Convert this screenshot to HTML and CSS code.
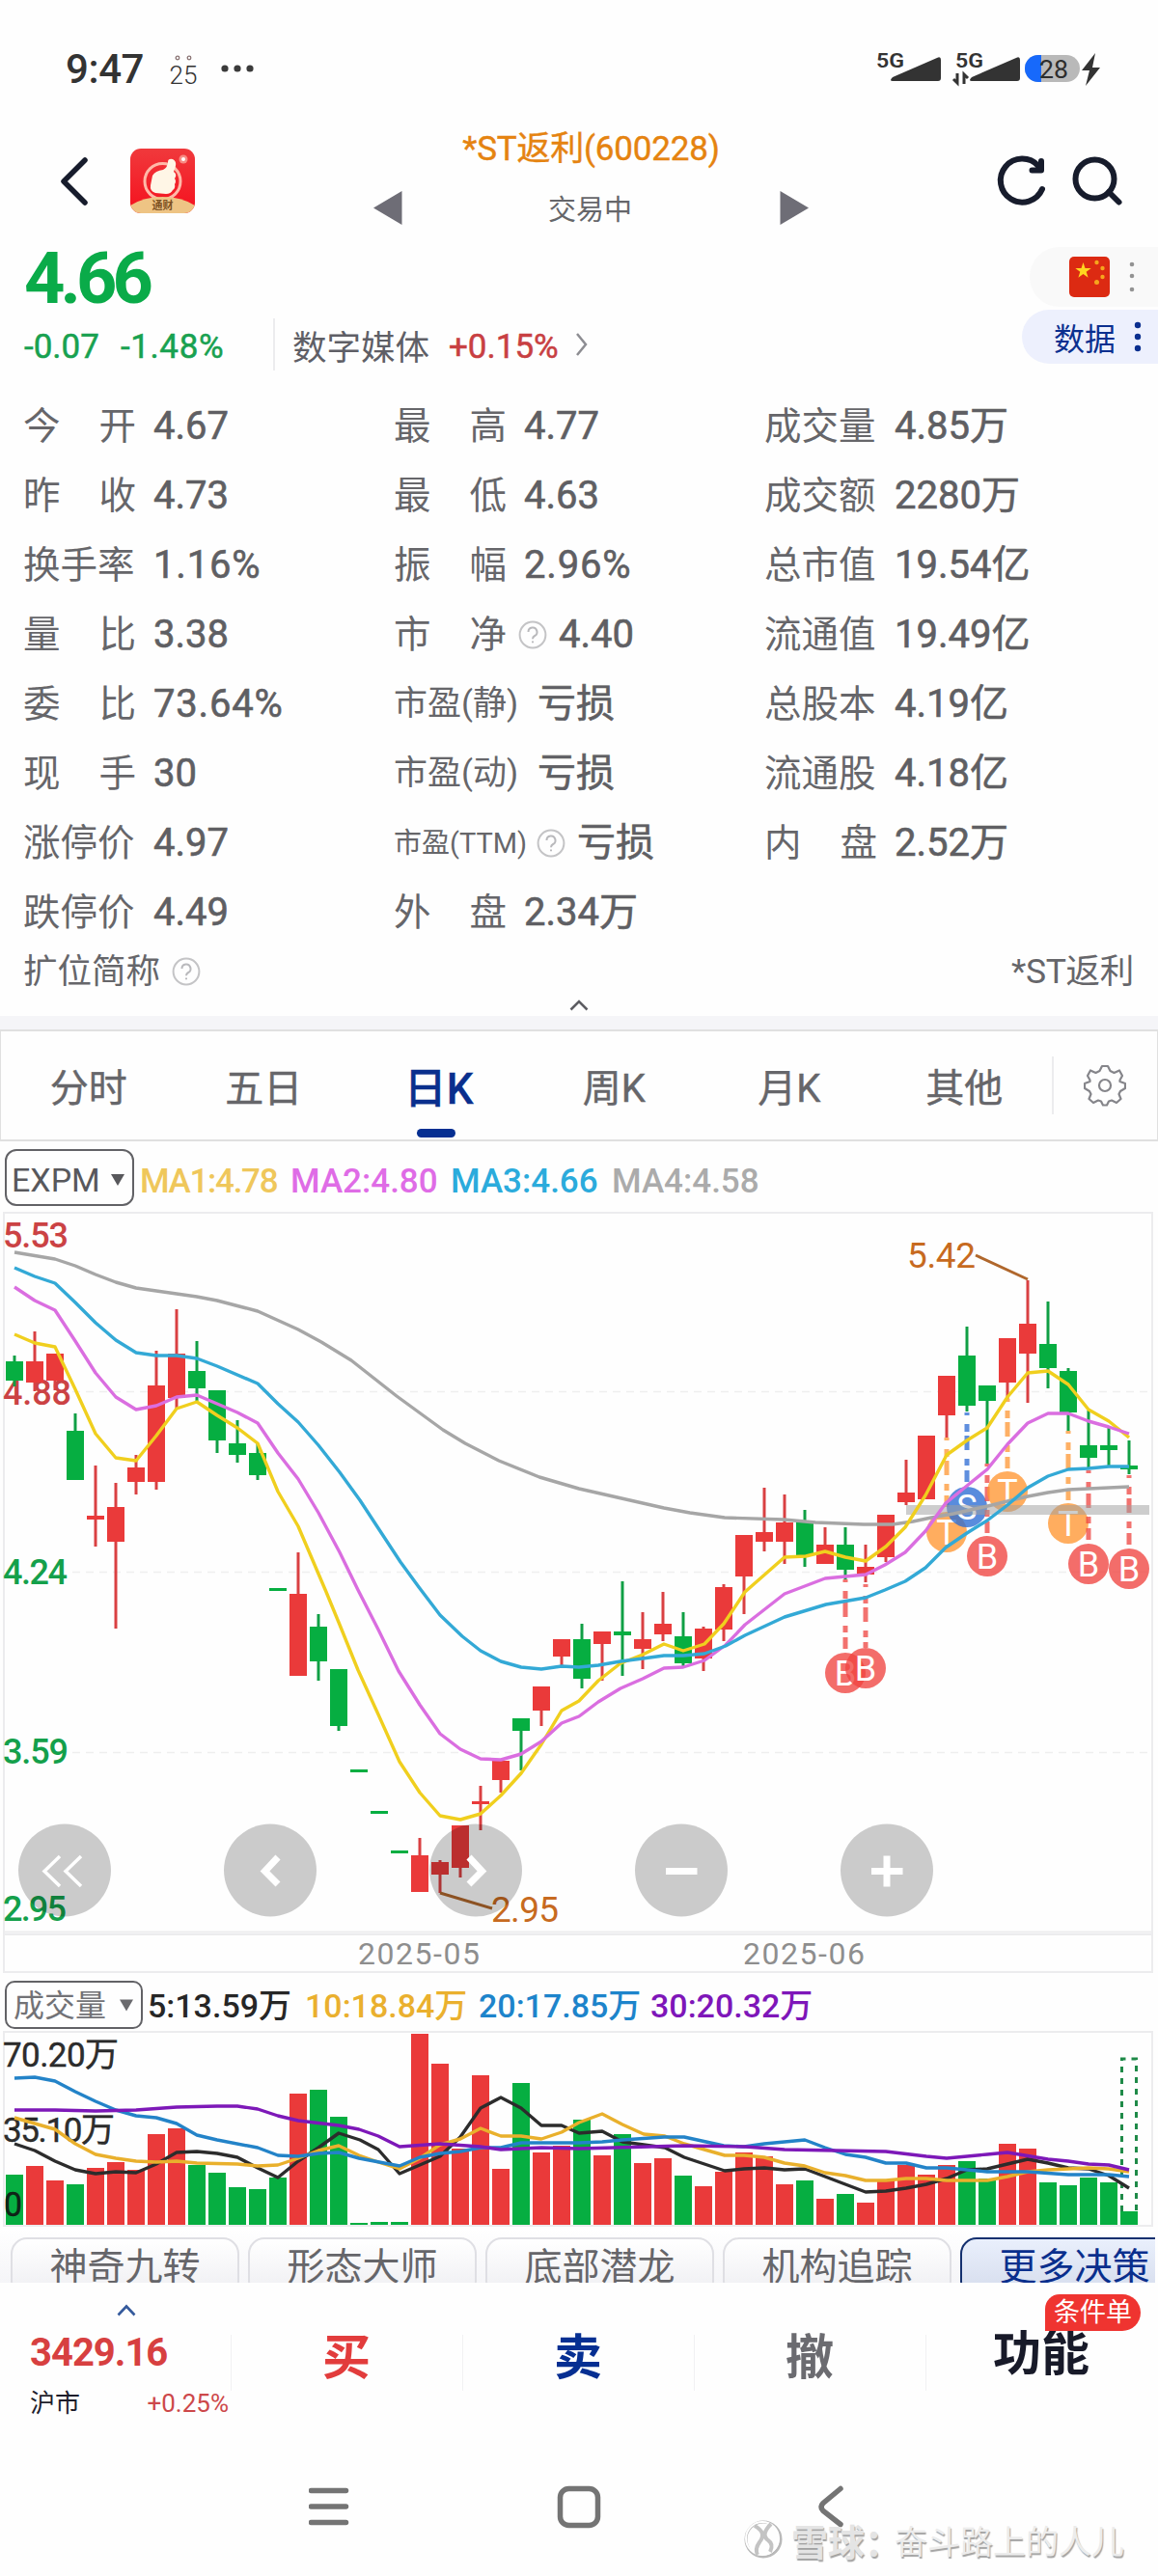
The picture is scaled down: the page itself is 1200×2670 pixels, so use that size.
FILE: index.html
```html
<!DOCTYPE html>
<html lang="zh-CN">
<head>
<meta charset="utf-8">
<title>*ST返利(600228)</title>
<link rel="stylesheet" href="styles.css">
</head>
<body>
<svg class="defs" width="0" height="0">
  <symbol id="help" viewBox="0 0 30 30"><circle cx="15" cy="15" r="13.4" fill="none" stroke="#c4c4c6" stroke-width="2"/><path d="M10.5 12a4.5 4.5 0 1 1 6.600 4c-1.500.8-2.100 1.500-2.100 3.200M15 21.500v1.800" fill="none" stroke="#b9b9bc" stroke-width="2"/></symbol>
</svg>
<main class="screen">
  <div class="status">
    <span class="clock">9:47</span>
    <span class="temp"><svg width="20" height="10" viewBox="0 0 20 10" fill="none" stroke="#8a7474" stroke-width="1.300"><circle cx="4" cy="5" r="1.800"/><circle cx="16" cy="5" r="1.800"/></svg><b>25</b></span>
    <svg class="more" width="34" height="8" viewBox="0 0 34 8" fill="#3b3b3b"><circle cx="4" cy="4" r="3.600"/><circle cx="17" cy="4" r="3.600"/><circle cx="30" cy="4" r="3.600"/></svg>
    <svg class="signals" width="240" height="42" viewBox="905 50 240 42">
      <g class="net"><text x="908" y="70" textLength="29" lengthAdjust="spacingAndGlyphs">5G</text><text x="990" y="70" textLength="29" lengthAdjust="spacingAndGlyphs">5G</text></g>
      <path d="M925 84h47q3 0 3-3V62q0-4-4-2l-46 20q-4 4 0 4zM1007 84h47q3 0 3-3V62q0-4-4-2l-46 20q-4 4 0 4z" fill="#333"/>
      <path d="M992 76v10l-4-4M999 87V77l4 4" fill="none" stroke="#333" stroke-width="3"/>
      <rect x="1062" y="57" width="57" height="28" rx="14" fill="#b9b9b9"/>
      <path d="M1079 57h-3a14 14 0 0 0 0 28h3z" fill="#1769fb"/>
      <text class="batt" x="1077" y="81" textLength="30" lengthAdjust="spacingAndGlyphs">28</text>
      <path d="M1135 55l-14 18h8l-4 16 15-19h-8z" fill="#333"/>
    </svg>
  </div>

  <header class="head">
    <svg class="back" width="30" height="52" viewBox="0 0 30 52"><path d="M26 4L4 26l22 22" fill="none" stroke="#171c2c" stroke-width="5.500" stroke-linecap="round" stroke-linejoin="round"/></svg>
    <svg class="logo" width="67" height="67" viewBox="0 0 67 67">
      <defs><clipPath id="lc"><rect width="67" height="67" rx="11"/></clipPath><linearGradient id="lg" x2="0" y2="1"><stop stop-color="#f0393c"/><stop offset="1" stop-color="#f5111e"/></linearGradient></defs>
      <g clip-path="url(#lc)"><rect width="67" height="67" fill="url(#lg)"/>
      <circle cx="33.500" cy="34" r="18.500" fill="none" stroke="#ffb9a8" stroke-width="3"/>
      <path d="M23 28q3-5 11-6 5-3 5-8 0-4 5-3 4 2 3 7l-2 6q4 3 1 7 2 3 0 6 1 4-2 6-2 4-7 4l-11-1q-6-2-5-8z" fill="#fff6e6"/>
      <circle cx="55" cy="11" r="4.500" fill="#f88b83"/><circle cx="55" cy="11" r="2" fill="#fff"/>
      <path d="M0 59q14-9 33.500-9T67 59v8H0z" fill="#eec484"/></g>
      <text x="33.500" y="63" text-anchor="middle" class="logo-text">通财</text>
    </svg>
    <svg class="arrow left" width="30" height="35" viewBox="0 0 30 35"><path d="M29.500 0v35L0 17.500z" fill="#6e6d76"/></svg>
    <div class="title"><h1>*ST返利(600228)</h1><p>交易中</p></div>
    <svg class="arrow right" width="30" height="35" viewBox="0 0 30 35"><path d="M.5 0v35L30 17.500z" fill="#6e6d76"/></svg>
    <svg class="tools" width="132" height="54" viewBox="1032 161 132 54" fill="none" stroke="#171c2c" stroke-width="6" stroke-linecap="round">
      <path d="M1080 196a22.500 22.500 0 1 1-4-24"/><path d="M1079 167v9.500h-9.500" stroke-linejoin="round"/><path d="M1079 168v9h-9z" fill="#171c2c" stroke="none"/>
      <circle cx="1134.500" cy="185.500" r="20"/><path d="M1149 199l10.500 10.500"/>
    </svg>
  </header>

  <section class="quote">
    <div class="quote-main">
      <div class="price">4.66</div>
      <div class="change"><span class="g1">-0.07</span><span class="g2">-1.48%</span><span class="sep"></span><span class="sector">数字媒体</span><span class="sector-chg">+0.15%</span><svg width="14" height="26" viewBox="0 0 14 26"><path d="M2 2l9 11-9 11" fill="none" stroke="#8d8d92" stroke-width="2.500"/></svg></div>
    </div>
    <div class="chips">
      <div class="chip flag-chip">
        <svg width="42" height="42" viewBox="0 0 42 42"><rect width="42" height="42" rx="5" fill="#dc2a12"/><path d="M14.500 6l2 6h6.200l-5 3.700 1.900 6-5.100-3.700-5.100 3.700 1.900-6-5-3.700h6.200z" fill="#ffd61f"/><g fill="#f6a51d"><circle cx="28.500" cy="6" r="2.200"/><circle cx="34.500" cy="12" r="2.200"/><circle cx="34.500" cy="21" r="2.200"/><circle cx="28.500" cy="26.500" r="2.500"/></g></svg>
        <svg width="6" height="34" viewBox="0 0 6 34" fill="#939393"><circle cx="3" cy="4" r="2.300"/><circle cx="3" cy="16" r="2.300"/><circle cx="3" cy="30" r="2.300"/></svg>
      </div>
      <div class="chip data-chip"><span>数据</span><svg width="8" height="34" viewBox="0 0 8 34" fill="#0b2f8f"><circle cx="4" cy="5" r="3.200"/><circle cx="4" cy="17" r="3.200"/><circle cx="4" cy="29" r="3.200"/></svg></div>
    </div>
  </section>

  <section class="facts">
    <div><label><i>今</i><i>开</i></label><b>4.67</b></div><div><label><i>最</i><i>高</i></label><b>4.77</b></div><div><label>成交量</label><b>4.85万</b></div>
    <div><label><i>昨</i><i>收</i></label><b>4.73</b></div><div><label><i>最</i><i>低</i></label><b>4.63</b></div><div><label>成交额</label><b>2280万</b></div>
    <div><label>换手率</label><b class="pct">1.16%</b></div><div><label><i>振</i><i>幅</i></label><b class="pct">2.96%</b></div><div><label>总市值</label><b>19.54亿</b></div>
    <div><label><i>量</i><i>比</i></label><b>3.38</b></div><div><label><i>市</i><i>净</i></label><svg class="help"><use href="#help"/></svg><b class="after-help">4.40</b></div><div><label>流通值</label><b>19.49亿</b></div>
    <div><label><i>委</i><i>比</i></label><b class="pct">73.64%</b></div><div><label class="mid">市盈(静)</label><b>亏损</b></div><div><label>总股本</label><b>4.19亿</b></div>
    <div><label><i>现</i><i>手</i></label><b>30</b></div><div><label class="mid">市盈(动)</label><b>亏损</b></div><div><label>流通股</label><b>4.18亿</b></div>
    <div><label>涨停价</label><b>4.97</b></div><div><label class="small">市盈(TTM)</label><svg class="help"><use href="#help"/></svg><b class="after-help">亏损</b></div><div><label><i>内</i><i>盘</i></label><b>2.52万</b></div>
    <div><label>跌停价</label><b>4.49</b></div><div><label><i>外</i><i>盘</i></label><b>2.34万</b></div><div></div>
  </section>
  <div class="short-name"><span>扩位简称</span><svg class="help"><use href="#help"/></svg><span class="short-value">*ST返利</span></div>
  <div class="collapse"><svg width="20" height="12" viewBox="0 0 20 12"><path d="M1.500 10.500L10 2l8.500 8.500" fill="none" stroke="#5d5d62" stroke-width="2.500"/></svg></div>
  <div class="band"></div>

  <nav class="tabs">
    <span>分时</span><span>五日</span><span class="on">日K</span><span>周K</span><span>月K</span><span>其他</span>
    <div class="gear"><svg width="44" height="44" viewBox="-22 -22 44 44" fill="none" stroke="#85858a" stroke-width="2.200" stroke-linejoin="round"><path d="M-3-20H3L5.500-15 9.500-13 15-15.500 18-10 15.500-5.500V-4L21-2V3L16 6 14.500 9 16.500 14 12 18 7 15.500 4 16.500 2 20.500H-2L-4 16.500-7 15.500-12 18-16.500 14-14.500 9-16 6-21 3V-2L-15.500-4V-5.500L-18-10-15-15.500-9.500-13-5.500-15z"/><circle r="6"/></svg></div>
  </nav>

  <div class="legend">
    <span class="select">EXPM<svg width="14" height="12" viewBox="0 0 14 12"><path d="M0 0h14L7 12z" fill="#58585c"/></svg></span>
    <span class="ma1">MA1:4.78</span><span class="ma2">MA2:4.80</span><span class="ma3">MA3:4.66</span><span class="ma4">MA4:4.58</span>
  </div>
  <svg id="kline" class="chart" width="1200" height="790" viewBox="0 1256 1200 790">
    <g fill="none" stroke="#ececee" stroke-width="2"><path d="M4 2044V1257H1194V2044z"/><path d="M4 2002.500H1194M4 2005H1194"/></g>
    <path d="M75 1442.500H1190M75 1629.500H1190M75 1816.500H1190" stroke="#efefef" stroke-width="1.500" stroke-dasharray="8 6"/>
    <g class="axis">
      <text x="3" y="1293" textLength="68">5.53</text><text x="3" y="1456" textLength="71">4.88</text>
      <text x="3" y="1642" textLength="67" class="down">4.24</text><text x="3" y="1828" textLength="68" class="down">3.59</text><text x="3" y="1991" textLength="66" class="down">2.95</text>
    </g>
    <g id="candles"></g>
    <g class="note"><path d="M1011 1301L1065 1326M456 1962L510 1978"/><text x="940" y="1313.500" textLength="71">5.42</text><text x="509" y="1991.500" textLength="70">2.95</text></g>
    <g class="dates"><text x="371" y="2035.500" textLength="126">2025-05</text><text x="770" y="2035.500" textLength="126">2025-06</text></g>
    <g id="signals"></g>
    <rect x="939" y="1560" width="252" height="10" fill="#a0a0a0" fill-opacity=".52"/>
    <g id="averages" class="lines"></g>
    <g class="controls">
      <circle cx="67" cy="1938.500" r="48"/><circle cx="280" cy="1938.500" r="48"/><circle cx="493" cy="1938.500" r="48"/><circle cx="706" cy="1938.500" r="48"/><circle cx="919" cy="1938.500" r="48"/>
      <path class="thin" d="M62 1924L46 1939.500 62 1955M84 1924L68 1939.500 84 1955"/>
      <path d="M288 1925L274.500 1939.500 288 1953M486 1925L499.500 1939.500 486 1953"/><path d="M690 1939.500H722.500M903 1939.500H935.500M919 1923.500V1955.500" stroke-width="8.500"/>
    </g>
  </svg>

  <div class="legend vol-legend">
    <span class="select">成交量<svg width="14" height="13" viewBox="0 0 14 12"><path d="M0 0h14L7 12z" fill="#6a6a6e"/></svg></span>
    <span class="v5">5:13.59万</span><span class="v10">10:18.84万</span><span class="v20">20:17.85万</span><span class="v30">30:20.32万</span>
  </div>
  <svg id="volume" class="chart" width="1200" height="205" viewBox="0 2105 1200 205">
    <path d="M4 2307V2106H1194V2307z" fill="none" stroke="#ececee" stroke-width="2"/>
    <g id="bars"></g>
    <path d="M1162.500 2292V2134H1177.500V2292" fill="none" stroke="#1f8a48" stroke-width="3" stroke-dasharray="6 6"/>
    <g class="vol-axis"><text x="3" y="2142" textLength="120">70.20万</text><text x="3" y="2220" textLength="116">35.10万</text><text x="4" y="2297" textLength="19" lengthAdjust="spacingAndGlyphs">0</text></g>
    <g id="volAverages" class="lines"></g>
  </svg>

  <div class="pills"><span>神奇九转</span><span>形态大师</span><span>底部潜龙</span><span>机构追踪</span><span class="primary">更多决策</span></div>

  <footer class="trade">
    <div class="index"><svg width="20" height="13" viewBox="0 0 20 13"><path d="M1.500 11.500L10 2.500l8.500 9" fill="none" stroke="#355a9c" stroke-width="2.600"/></svg><strong>3429.16</strong><p><span>沪市</span><em>+0.25%</em></p></div>
    <div class="act buy">买</div><div class="act sell">卖</div><div class="act cancel">撤</div>
    <div class="act func">功能<span class="badge">条件单</span></div>
  </footer>

  <div class="sysnav">
    <svg class="keys" width="540" height="50" viewBox="320 2571 540 50" fill="none" stroke="#747474" stroke-width="5.500" stroke-linecap="round" stroke-linejoin="round"><path d="M322.500 2579.500H358.500M322.500 2596H358.500M322.500 2612.500H358.500"/><rect x="580.500" y="2577.500" width="39" height="38" rx="9"/></svg>
    <svg class="back-key" width="30" height="50" viewBox="845 2571 30 50"><path d="M871 2577.500L853 2592.500Q849 2596.500 853 2600.500L871 2614.500" fill="none" stroke="#747474" stroke-width="5.500" stroke-linecap="round"/></svg>
    <div class="mark">
      <svg width="42" height="42" viewBox="0 0 42 42" fill="none"><circle cx="21" cy="21" r="18" stroke="#b9b9b9" stroke-width="3"/><circle cx="20" cy="20" r="17" stroke="#fff" stroke-width="2"/><path d="M12 7q13 7 5 17-5 7-2 13M29 5q-11 11-3 17 6 4 2 12" stroke="#c3c3c3" stroke-width="4"/></svg>
      <b>雪球：</b><span>奋斗路上的人儿</span>
    </div>
  </div>
</main>
<script src="chart.js"></script>
</body>
</html>
```
FILE: styles.css
```css
* { box-sizing: border-box; }
body { margin: 0; background: #fff; }
.screen { width: 1200px; height: 2670px; overflow: hidden; display: flex; flex-direction: column; background: #fefefe; font-family: Roboto, "Noto Sans CJK SC", sans-serif; color: #66666a; }
.screen > * { flex: none; }
svg { display: block; flex: none; }
.defs { position: absolute; }
i, em { font-style: normal; }
h1, p { margin: 0; font-weight: 400; }
span, b, strong, label { white-space: nowrap; }

.status { height: 140px; padding: 50px 55px 48px 68px; display: flex; align-items: center; color: #333; }
.clock { font-size: 42px; line-height: 42px; font-weight: 500; letter-spacing: -.4px; width: 81px; padding-top: 2px; }
.temp { width: 30px; margin-left: 26px; display: flex; flex-direction: column; align-items: center; font-size: 25px; line-height: 19px; gap: 4px; }
.temp b { font-weight: 300; font-size: 26px; }
.more { margin-left: 24px; }
.signals { margin-left: auto; }
.net { font-size: 21px; font-weight: 600; fill: #333; }
.batt { font-size: 26px; fill: #2d2d2d; }

.head { height: 110px; display: flex; align-items: center; padding-left: 62px; }
.back { margin-top: -14px; }
.logo { margin: -15px 0 0 43px; }
.logo-text { font-size: 11px; font-weight: 700; fill: #7d5122; }
.arrow.left { margin: 40px 0 0 185px; }
.title { width: 391px; text-align: center; }
.title h1 { font-size: 35px; line-height: 44px; color: #e58310; letter-spacing: -.2px; margin-top: -22px; -webkit-text-stroke: .4px currentColor; }
.title p { font-size: 29px; line-height: 36px; margin: 23px 2px 0 0; }
.arrow.right { margin-top: 40px; }
.tools { margin-left: 194px; margin-top: -14px; }

.quote { height: 156px; display: flex; justify-content: space-between; }
.quote-main { padding-left: 25px; }
.price { font-size: 74px; line-height: 74px; font-weight: 700; letter-spacing: -5px; color: #0aab49; padding-top: 2px; }
.change { height: 54px; margin-top: 4px; display: flex; align-items: center; font-size: 35px; color: #18a150; }
.g1, .g2, .sector-chg { padding-top: 4px; -webkit-text-stroke: .5px currentColor; }
.g1 { width: 100px; }
.g2 { width: 158px; letter-spacing: .6px; }
.sep { width: 2px; height: 54px; background: #ececee; }
.sector { margin-left: 18px; font-size: 35.500px; color: #5f5f66; width: 162px; }
.sector-chg { width: 131px; color: #c83f42; }
.chips { display: flex; flex-direction: column; align-items: flex-end; gap: 3px; padding-top: 6px; }
.chip { display: flex; align-items: center; }
.flag-chip { width: 133px; height: 62px; padding-left: 41px; gap: 20px; background: #f9f9f9; border-radius: 31px 0 0 31px; }
.data-chip { width: 141px; height: 56px; padding-left: 33px; gap: 19px; background: #edf0fd; border-radius: 28px 0 0 28px; color: #0b2f8f; font-size: 32px; }

.facts { display: grid; grid-template-columns: 384px 384px 1fr; grid-auto-rows: 72px; padding-left: 24px; height: 576px; }
.facts > div { display: flex; align-items: center; }
.facts label { width: 117px; display: flex; justify-content: space-between; font-size: 38.500px; line-height: 60px; }
.facts b { margin-left: 18px; font-weight: 400; font-size: 40px; line-height: 60px; color: #5f5f63; -webkit-text-stroke: .6px currentColor; }
.facts .pct { letter-spacing: .8px; }
.facts .mid { width: 131px; font-size: 35px; }
.facts .small { width: 136px; font-size: 29px; }
.help { width: 30px; height: 30px; margin-left: 12px; }
.facts .after-help { margin-left: 12px; }
.short-name { height: 50px; padding: 0 25px 0 24px; display: flex; align-items: center; font-size: 35.500px; line-height: 50px; }
.short-value { margin-left: auto; letter-spacing: -.3px; }
.collapse { height: 21px; display: flex; justify-content: center; padding-top: 4px; }
.band { height: 14px; background: #f5f5f8; }

.tabs { height: 116px; border: 1px solid #e0e0e0; border-width: 2px 1px; display: flex; align-items: center; font-size: 40px; line-height: 60px; }
.tabs span { width: 181.5px; height: 100%; display: flex; align-items: center; justify-content: center; position: relative; padding-top: 7px; -webkit-text-stroke: .4px currentColor; }
.tabs .on { font-size: 44px; font-weight: 500; color: #0a2f8d; -webkit-text-stroke: .3px currentColor; }
.tabs .on::after { content: ""; position: absolute; bottom: 2px; left: 68px; width: 40px; height: 9px; border-radius: 5px; background: #062f92; }
.tabs .gear { width: 106px; height: 60px; border-left: 2px solid #ececee; padding: 8px 0 0 31px; }

.legend { height: 73px; padding-left: 5px; display: flex; align-items: center; font-size: 35px; line-height: 50px; font-weight: 500; }
.legend > span:not(.select) { padding-top: 10px; }
.legend .select { display: flex; align-items: center; border: 2px solid #626266; border-radius: 12px; height: 59px; width: 134px; padding: 4px 8px 0 5px; justify-content: space-between; font-size: 34px; font-weight: 400; color: #58585c; margin-top: 2px; }
.ma1 { width: 156px; margin-left: 6px; color: #efc75b; letter-spacing: -1.300px; }
.ma2 { width: 166px; color: #df6ce6; }
.ma3 { width: 167px; color: #2babdc; }
.ma4 { color: #ababab; }
.chart { width: 1200px; }
.axis { font-size: 36px; font-weight: 500; fill: #cb4244; }
.axis .down { fill: #14a04b; }
.note path { fill: none; stroke: #b0672c; stroke-width: 3; }
.note { font-size: 37px; fill: #c76a20; }
.dates { font-size: 32px; fill: #8e8e8e; }
.lines { fill: none; stroke-width: 3.400; stroke-linejoin: round; }
.controls circle { fill: #000; fill-opacity: .2; }
.controls path { fill: none; stroke: #fff; stroke-width: 7; }
.controls .thin { stroke-width: 3.500; }
.signal text { font-size: 36px; fill: #fff; text-anchor: middle; }

.vol-legend { height: 59px; padding-left: 5px; font-size: 34px; }
.vol-legend > span:not(.select) { padding-top: 7px; }
.vol-legend .select { width: 143px; height: 50px; font-size: 32px; padding: 2px 8px 0 7px; border-radius: 10px; margin: 4px 0 0; color: #727276; }
.v5 { margin-left: 5px; width: 163px; color: #262626; }
.v10 { width: 180px; color: #eab02e; }
.v20 { width: 178px; color: #1d84cb; }
.v30 { color: #7e16b9; }
.vol-axis { font-size: 35px; fill: #111; stroke: #111; stroke-width: .4px; fill-opacity: .9; }

.pills { height: 56px; padding: 9px 0 0 11px; display: flex; gap: 9px; overflow: hidden; margin-right: 3px; background: linear-gradient(#fff, #f5f5f8); }
.pills span { flex: none; width: 237px; height: 62px; line-height: 58px; border: 2px solid #dfdfe4; border-radius: 17px; text-align: center; font-size: 39px; background: linear-gradient(#fff, #eeeef2); }
.pills .primary { color: #0a2f8d; border-color: #14306f; background: linear-gradient(#e9effc, #d5dcec); }

.trade { height: 164px; display: flex; align-items: flex-start; }
.index { width: 239px; padding: 22px 0 0 31px; }
.index svg { margin-left: 90px; }
.index strong { display: block; font-size: 40px; line-height: 46px; margin-top: 15px; color: #d74040; letter-spacing: -1px; }
.index p { display: flex; justify-content: space-between; font-size: 26px; line-height: 40px; color: #1d1d2b; margin-top: 9px; }
.index em { color: #cd484a; letter-spacing: 0; }
.act { width: 240px; height: 150px; text-align: center; font-size: 50px; line-height: 156px; font-weight: 700; background: linear-gradient(#f1f1f3, #f1f1f3) 0 54px / 1px 58px no-repeat; }
.buy { color: #e23c3c; }
.sell { color: #062f92; }
.cancel { color: #6b6b70; }
.func { color: #181a29; line-height: 149px; position: relative; }
.badge { position: absolute; left: 124px; top: 12px; width: 99px; height: 38px; border-radius: 15px 19px 19px 0; background: #ef3430; color: #fff; font-size: 27px; line-height: 39px; font-weight: 400; }
.index p { padding-right: 2px; }

.sysnav { height: 140px; padding: 43px 0 0 320px; display: flex; }
.back-key { margin-left: -15px; }
.mark { margin: 34px 0 0 -105px; display: flex; align-items: center; height: 50px; color: #d2d2d2; font-size: 34px; text-shadow: 1px 2px 1px #a2a2a2; z-index: 1; }
.mark b { font-size: 38px; margin-left: 8px; width: 107px; overflow: hidden; color: #e4e4e4; }
.mark span { color: #ececec; }
```
FILE: chart.js
```js
const NS = 'http://www.w3.org/2000/svg';
const RED = '#ea3a3a', GREEN = '#06ae41';
const BASE = 2306;
const cx = i => 15 + i * 21;

function add(parent, tag, attrs, text) {
  const el = document.createElementNS(NS, tag);
  for (const k in attrs) el.setAttribute(k, attrs[k]);
  if (text) el.textContent = text;
  parent.appendChild(el);
  return el;
}

// colour, high, body top, body bottom, low, volume top
const days = `g 1405 1411 1431 1437 2254
r 1380 1411 1433 1442 2245
r 1403 1403 1431 1441 2260
g 1465 1483 1534 1534 2264
r 1519 1571 1575 1603 2247
r 1537 1562 1598 1688 2241
r 1508 1521 1536 1549 2249
r 1400 1436 1536 1544 2212
r 1357 1403 1449 1461 2206
g 1390 1421 1439 1452 2244
g 1441 1441 1493 1506 2252
g 1472 1496 1508 1516 2267
g 1496 1506 1529 1534 2269
g 1646 1646 1649 1649 2257
r 1609 1652 1737 1737 2170
g 1673 1686 1722 1742 2166
g 1730 1730 1789 1794 2194
g 1834 1834 1837 1837 2304
g 1877 1877 1880 1880 2303
g 1918 1918 1921 1921 2303
r 1905 1923 1961 1961 2108
r 1928 1930 1943 1962 2139
r 1892 1892 1936 1946 2227
r 1851 1867 1870 1897 2151
r 1825 1825 1845 1858 2248
g 1781 1781 1794 1835 2159
r 1748 1748 1773 1789 2231
r 1699 1699 1717 1729 2224
g 1683 1699 1740 1750 2197
r 1691 1691 1704 1742 2234
g 1639 1691 1695 1737 2212
r 1671 1699 1709 1730 2242
r 1650 1683 1694 1701 2237
g 1671 1696 1724 1727 2255
r 1686 1688 1719 1732 2266
r 1642 1645 1689 1701 2251
r 1591 1591 1634 1673 2231
r 1542 1588 1598 1608 2235
r 1549 1578 1598 1621 2264
g 1565 1577 1612 1624 2260
r 1583 1601 1621 1621 2279
g 1583 1601 1627 1637 2274
r 1601 1624 1632 1640 2283
r 1570 1570 1614 1619 2260
r 1513 1547 1557 1560 2244
r 1488 1488 1554 1554 2254
r 1426 1426 1467 1490 2244
g 1375 1405 1457 1463 2240
g 1436 1436 1452 1517 2258
r 1387 1387 1433 1450 2222
r 1327 1372 1403 1454 2227
g 1349 1393 1418 1439 2262
g 1418 1421 1464 1483 2265
g 1462 1498 1511 1523 2257
g 1480 1498 1503 1520 2262
g 1493 1519 1523 1528 2292`.split('\n').map(r => r.split(' '));

const candles = document.getElementById('candles');
const bars = document.getElementById('bars');
days.forEach(([c, hi, top, bot, lo, vol], i) => {
  const fill = c === 'r' ? RED : GREEN, x = cx(i);
  add(candles, 'rect', { x: x - 1.5, y: hi, width: 3, height: lo - hi, fill: c === 'r' ? '#d94042' : '#109f45' });
  add(candles, 'rect', { x: x - 9, y: top, width: 18, height: bot - top, fill });
  add(bars, 'rect', { x: x - 9, y: vol, width: 18, height: BASE - vol, fill });
});

// letter, day, stem start, marker centre, colour
const signals = document.getElementById('signals');
[['B', 41, 1637, 1734, '#ef4440'], ['B', 42, 1642, 1729, '#ef4440'],
 ['T', 46, 1490, 1588, '#ff9632'], ['S', 47, 1464, 1562, '#2a6bd4'],
 ['B', 48, 1517, 1613, '#ef4440'], ['T', 49, 1450, 1546, '#ff9632'],
 ['T', 52, 1483, 1579, '#ff9632'], ['B', 53, 1524, 1621, '#ef4440'],
 ['B', 55, 1529, 1626, '#ef4440']].forEach(([t, i, y1, y2, col]) => {
  const g = add(signals, 'g', { class: 'signal' });
  add(g, 'path', { d: `M${cx(i)} ${y1}V${y2 - 21}`, stroke: col, 'stroke-width': 5, 'stroke-dasharray': '3 9 8 4 15 9 7 5 12 20', opacity: .75 });
  add(g, 'circle', { cx: cx(i), cy: y2, r: 21, fill: col, 'fill-opacity': .78 });
  add(g, 'text', { x: cx(i), y: y2 + 13 }, t);
});

function line(id, color, pts) {
  add(document.getElementById(id), 'polyline', { points: pts, stroke: color });
}
line('averages', '#a6a6a6', '15,1298 57,1305 78,1312 99,1321 120,1329 141,1335 162,1338 183,1341 204,1344 225,1348 267,1359 309,1378 333,1391 364,1410 411,1447 459,1482 482,1496 517,1514 559,1531 600,1543 688,1563 715,1568 751,1573 812,1575 845,1578 895,1580 925,1580 946,1577 965,1573 988,1569 1010,1564 1032,1559 1048,1555 1065,1551 1086,1547 1107,1544 1170,1541');
line('averages', '#f0cf1e', '15,1383 36,1392 57,1396 78,1440 99,1486 120,1511 141,1514 162,1488 183,1460 204,1453 225,1467 246,1480 267,1496 288,1546 309,1582 338,1650 352,1684 371,1731 392,1777 414,1826 435,1858 456,1882 477,1886 498,1880 519,1861 540,1838 561,1808 582,1773 600,1763 620,1742 643,1724 666,1715 688,1704 708,1711 730,1704 750,1683 772,1650 813,1614 835,1613 855,1608 876,1614 897,1618 918,1603 938,1583 959,1550 981,1508 1002,1493 1023,1480 1044,1448 1065,1423 1086,1421 1107,1435 1128,1461 1149,1473 1170,1490');
line('averages', '#da6ee0', '15,1334 36,1348 57,1358 78,1390 99,1423 120,1448 141,1461 162,1457 183,1448 204,1446 225,1455 246,1464 267,1475 288,1506 309,1533 330,1568 352,1609 371,1648 392,1689 413,1732 435,1767 456,1797 477,1813 498,1823 519,1824 540,1818 561,1805 582,1786 600,1779 620,1764 643,1750 666,1740 688,1729 708,1728 730,1721 752,1705 772,1684 813,1652 855,1636 897,1632 917,1622 938,1609 959,1587 980,1558 1002,1540 1023,1523 1044,1497 1065,1475 1086,1465 1107,1465 1128,1473 1149,1479 1170,1486');
line('averages', '#33a9d6', '15,1314 36,1323 57,1330 78,1350 99,1371 120,1389 141,1402 162,1405 183,1405 204,1408 225,1416 267,1434 288,1455 309,1474 330,1498 352,1526 373,1555 392,1584 415,1619 434,1645 456,1674 479,1696 498,1711 519,1722 540,1728 561,1730 582,1727 600,1728 620,1726 643,1722 666,1719 688,1716 708,1716 730,1714 752,1706 772,1695 813,1676 856,1663 897,1656 917,1648 938,1639 959,1625 980,1604 1002,1589 1023,1576 1044,1560 1065,1542 1086,1530 1107,1523 1128,1522 1149,1520 1170,1520');
line('volAverages', '#2c2c2c', '15,2222 36,2229 57,2240 78,2249 99,2253 120,2251 141,2252 162,2243 183,2231 204,2230 225,2232 246,2236 267,2247 288,2257 309,2240 330,2226 351,2211 373,2218 392,2228 414,2253 456,2235 477,2215 498,2185 519,2174 540,2185 561,2203 582,2203 600,2211 624,2209 645,2220 667,2223 689,2226 709,2236 751,2250 771,2248 792,2247 813,2249 834,2248 855,2256 897,2272 918,2271 939,2268 960,2264 981,2258 1002,2249 1023,2248 1044,2243 1065,2238 1086,2242 1107,2247 1128,2248 1149,2255 1170,2268');
line('volAverages', '#e9b02c', '15,2195 36,2201 57,2207 78,2222 99,2233 120,2237 141,2240 162,2241 183,2240 204,2242 246,2243 267,2245 288,2244 309,2237 330,2229 351,2224 372,2234 392,2241 414,2248 435,2237 456,2223 477,2217 498,2206 519,2214 540,2214 561,2217 582,2210 600,2200 624,2191 645,2202 667,2212 689,2214 709,2222 730,2228 751,2234 771,2234 792,2236 813,2242 834,2245 855,2252 876,2255 897,2260 918,2260 939,2258 960,2258 981,2260 1023,2260 1044,2256 1065,2251 1086,2249 1128,2247 1149,2248 1170,2251');
line('volAverages', '#2383c8', '15,2154 36,2153 57,2157 78,2168 99,2178 120,2187 141,2193 162,2195 183,2201 204,2213 225,2218 267,2226 288,2234 309,2235 330,2232 351,2231 372,2237 414,2245 435,2236 456,2232 477,2230 498,2226 519,2226 540,2221 600,2221 624,2220 645,2218 688,2215 709,2215 750,2224 771,2225 792,2222 834,2218 855,2226 876,2233 897,2236 918,2242 939,2242 960,2247 981,2247 1023,2251 1065,2251 1107,2254 1149,2254 1170,2256');
line('volAverages', '#7d18b8', '15,2187 57,2187 99,2188 141,2187 183,2184 225,2183 246,2183 267,2186 288,2193 309,2198 351,2203 372,2207 392,2214 414,2225 456,2222 498,2225 519,2228 561,2226 600,2227 709,2224 772,2225 813,2228 918,2230 960,2235 981,2237 1023,2233 1044,2231 1086,2238 1107,2240 1128,2243 1149,2244 1170,2249');
```
